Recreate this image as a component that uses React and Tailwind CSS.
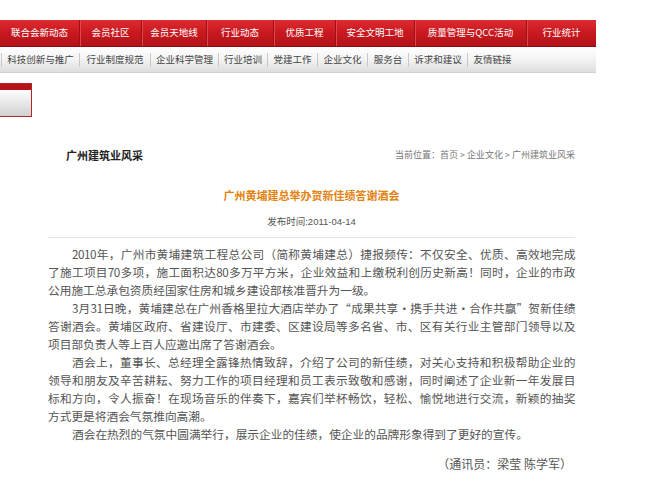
import React from "react";

const redItems = [
  ["联合会新动态", 79],
  ["会员社区", 62],
  ["会员天地线", 65],
  ["行业动态", 67],
  ["优质工程", 62],
  ["安全文明工地", 79],
  ["质量管理与QCC活动", 112],
  ["行业统计", 70],
];

const grayItems = [
  ["科技创新与推广", 78],
  ["行业制度规范", 71],
  ["企业科学管理", 68],
  ["行业培训", 49],
  ["党建工作", 50],
  ["企业文化", 50],
  ["服务台", 41],
  ["诉求和建议", 59],
  ["友情链接", 50],
];

const paragraphs = [
  [
    "2010年，广州市黄埔建筑工程总公司（简称黄埔建总）捷报频传：不仅安全、优质、高效地完成",
    "了施工项目70多项，施工面积达80多万平方米，企业效益和上缴税利创历史新高！同时，企业的市政",
    "公用施工总承包资质经国家住房和城乡建设部核准晋升为一级。",
  ],
  [
    "3月31日晚，黄埔建总在广州香格里拉大酒店举办了“成果共享·携手共进·合作共赢”贺新佳绩",
    "答谢酒会。黄埔区政府、省建设厅、市建委、区建设局等多名省、市、区有关行业主管部门领导以及",
    "项目部负责人等上百人应邀出席了答谢酒会。",
  ],
  [
    "酒会上，董事长、总经理全露锋热情致辞，介绍了公司的新佳绩，对关心支持和积极帮助企业的",
    "领导和朋友及辛苦耕耘、努力工作的项目经理和员工表示致敬和感谢，同时阐述了企业新一年发展目",
    "标和方向，令人振奋！在现场音乐的伴奏下，嘉宾们举杯畅饮，轻松、愉悦地进行交流，新颖的抽奖",
    "方式更是将酒会气氛推向高潮。",
  ],
  ["酒会在热烈的气氛中圆满举行，展示企业的佳绩，使企业的品牌形象得到了更好的宣传。"],
];

export default function App() {
  return (
    <div className="w-[657px] h-[491px] overflow-hidden bg-white font-['Noto_Sans_CJK_SC','Liberation_Sans',sans-serif]">
      <div className="h-[20px]" />
      {/* red nav */}
      <div className="flex h-[27px] w-[596px] bg-gradient-to-b from-[#dc2a30] via-[#c9181f] to-[#b3121a] border-b border-[#8e0c10]">
        {redItems.map(([t, w], i) => (
          <div
            key={t}
            style={{ width: w }}
            className={
              "flex items-center justify-center text-[9.5px] leading-none text-white " +
              (i > 0 ? "border-l border-[#a10e14] shadow-[inset_1px_0_0_#e0474c]" : "")
            }
          >
            {t}
          </div>
        ))}
      </div>
      {/* gray nav */}
      <div className="flex h-[26px] w-[596px] items-center bg-gradient-to-b from-[#ffffff] via-[#f3f3f3] to-[#dedede] border-b border-[#cfcfcf]">
        <div className="ml-[1px] flex items-center">
          {grayItems.map(([t, w]) => (
            <div
              key={t}
              style={{ width: w }}
              className="flex h-[14px] items-center justify-center border-l border-[#c8c8c8] text-[9.5px] leading-none text-[#444]"
            >
              {t}
            </div>
          ))}
        </div>
      </div>
      {/* small tab box */}
      <div className="mt-[10px] h-[34px] w-[32px] border border-l-0 border-[#b2262a] overflow-hidden flex flex-col">
        <div className="h-[6px] bg-[#b5121a]" />
        <div className="flex-1 bg-gradient-to-b from-[#ffffff] to-[#d0d0d0]" />
      </div>

      <div className="ml-[48px] w-[527px]">
        <div className="mt-[28px] flex h-[20px] items-center justify-between">
          <div className="pl-[18px] text-[11px] font-bold text-[#222]">广州建筑业风采</div>
          <div className="text-[9px] text-[#777]">当前位置：首页 &gt; 企业文化 &gt; 广州建筑业风采</div>
        </div>
        <div className="mt-[20px] flex h-[20px] items-center justify-center text-[11px] font-bold text-[#e3820f]">
          广州黄埔建总举办贺新佳绩答谢酒会
        </div>
        <div className="mt-[9px] flex h-[16px] items-center justify-center text-[9.5px] text-[#555] font-['Liberation_Sans','Noto_Sans_CJK_SC',sans-serif]">
          发布时间:2011-04-14
        </div>
        <div className="mt-[7px] border-t border-[#e6e6e6]" />
        <div className="mt-[7px] text-[11.7px] leading-[18px] text-[#555]">
          {paragraphs.map((lines, pi) => (
            <div key={pi}>
              {lines.map((l, li) => {
                const last = li === lines.length - 1;
                return (
                  <div
                    key={li}
                    className={
                      "h-[18px] whitespace-nowrap " +
                      (li === 0 ? "pl-[24px] " : "") +
                      (last ? "" : "tracking-[-0.5px] text-justify [text-align-last:justify]")
                    }
                  >
                    {l}
                  </div>
                );
              })}
            </div>
          ))}
          <div className="mt-[12px] pr-[3px] text-right text-[12px]">（通讯员：梁莹 陈学军）</div>
        </div>
      </div>
    </div>
  );
}
